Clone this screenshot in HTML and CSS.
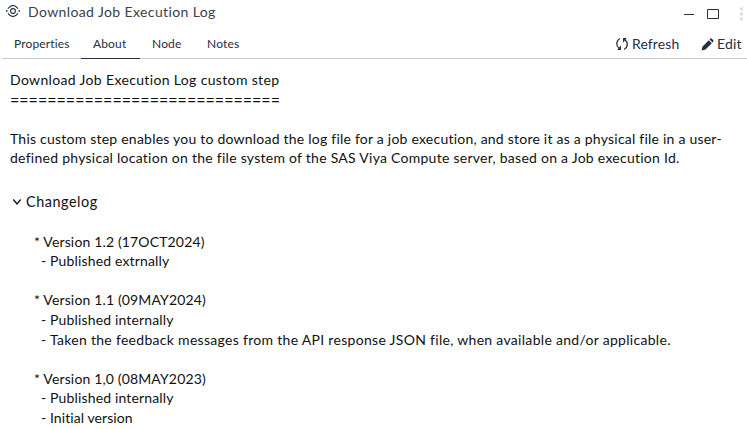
FILE: index.html
```html
<!DOCTYPE html>
<html lang="en">
<head>
<meta charset="utf-8">
<title>Download Job Execution Log</title>
<link rel="stylesheet" href="styles.css">
</head>
<body>
<header class="titlebar">
  <svg class="step-icon" width="16" height="14" viewBox="0 0 16 14" fill="none" stroke="#26303f" stroke-width="1.1"><circle cx="8" cy="7" r="2.4"/><path d="M3 4.7Q8-1.9 13 4.7M3 9.3Q8 15.9 13 9.3"/><path d="M1 6.2h1.6v1.6H1zM13.4 6.2H15v1.6h-1.6z" fill="#26303f" stroke="none"/></svg>
  <h1>Download Job Execution Log</h1>
  <svg class="window-icons" width="64" height="18" viewBox="0 0 64 18" fill="none"><path d="M1 10.5h10" stroke="#26303f"/><path d="M24.5 5.5h11v9h-11z" stroke="#26303f"/><path d="M57 3.5h3v3h-3zM57 8.5h3v3h-3zM57 13.5h3v3h-3z" fill="#dedee2"/></svg>
</header>
<div class="toolbar">
  <nav class="tabs"><span class="tab properties">Properties</span><span class="tab active">About</span><span class="tab node">Node</span><span class="tab notes">Notes</span></nav>
  <div class="actions">
    <span class="action refresh"><svg width="14" height="14" viewBox="0 0 14 14" fill="none" stroke="#26303f" stroke-width="1.3"><path d="M4.8 1.5A5.8 5.8 0 0 0 4 11.2M9.2 12.5A5.8 5.8 0 0 0 10 2.8"/><path d="M6 8.2V13H2.2zM8 5.8V1h3.8z" fill="#26303f" stroke="none"/></svg><span>Refresh</span></span>
    <span class="action edit"><svg width="13" height="13" viewBox="0 0 13 13" fill="#26303f"><path d="M.5 12.5l1-4L7.8 2.2l3 3L4.5 11.5zM8.6 1.4l.8-.8q.7-.5 1.4.1l1.5 1.5q.6.7 0 1.4l-.8.8z"/></svg><span>Edit</span></span>
  </div>
</div>
<main>
  <p class="l1">Download Job Execution Log custom step</p>
  <p class="rule">=============================</p>
  <p class="l2 gap">This custom step enables you to download the log file for a job execution, and store it as a physical file in a user-</p>
  <p class="l3">defined physical location on the file system of the SAS Viya Compute server, based on a Job execution Id.</p>
  <h2><svg width="10" height="8" viewBox="0 0 10 8" fill="none" stroke="#111" stroke-width="1.3"><path d="M1.3 1.5L5 6l3.7-4.5"/></svg><span>Changelog</span></h2>
  <section class="versions">
    <p class="ver">* Version 1.2 (17OCT2024)</p>
    <p class="item ext">- Published extrnally</p>
    <p class="ver gap">* Version 1.1 (09MAY2024)</p>
    <p class="item int">- Published internally</p>
    <p class="item taken">- Taken the feedback messages from the API response JSON file, when available and/or applicable.</p>
    <p class="ver gap">* Version 1,0 (08MAY2023)</p>
    <p class="item int">- Published internally</p>
    <p class="item init">- Initial version</p>
  </section>
</main>
</body>
</html>
```
FILE: styles.css
```css
* { box-sizing: border-box; }
body { margin: 0; width: 747px; height: 429px; overflow: hidden; background: #fff; color: #111; font: 14px/19.6px Lato, "Liberation Sans", sans-serif; font-variant-ligatures: none; }
h1, h2, p { margin: 0; font-weight: 400; white-space: pre; }
.titlebar { height: 30px; display: flex; align-items: flex-start; padding: 4px 0 0 5px; }
h1 { font-size: 14px; line-height: 15px; margin-left: 7px; color: #39414f; letter-spacing: .39px; }
.window-icons { margin-left: auto; }
.toolbar { height: 29px; margin-left: 2px; border-bottom: 1px solid #c9c9d2; display: flex; justify-content: space-between; color: #26303f; }
.tabs { display: flex; font-size: 12px; line-height: 28px; height: 29px; letter-spacing: .15px; }
.tab { padding: 0 12px; white-space: nowrap; }
.tab.properties { width: 79px; }
.tab.active { width: 59px; border-bottom: 1px solid #26303f; }
.tab.node { width: 55px; }
.actions { display: flex; font-size: 14px; line-height: 28px; }
.action { display: flex; align-items: center; white-space: nowrap; }
.refresh { width: 86px; gap: 3px; letter-spacing: .1px; }
.edit { width: 46px; gap: 3px; letter-spacing: .2px; }
main { padding: 11px 0 0 10px; }
.gap { margin-top: 19.6px; }
.l1 { letter-spacing: .35px; }
.rule { font-size: 16px; letter-spacing: .03px; }
.l2 { letter-spacing: .225px; }
.l3 { letter-spacing: .26px; }
h2 { display: flex; align-items: center; gap: 4px; margin: 24px 0 20px 2px; font-size: 14.4px; line-height: 19.6px; letter-spacing: .55px; }
.versions { padding-left: 24px; }
.ver { letter-spacing: .15px; }
.item { padding-left: 7px; letter-spacing: .15px; }
.init { letter-spacing: .08px; }
.taken { letter-spacing: .3px; }
```
